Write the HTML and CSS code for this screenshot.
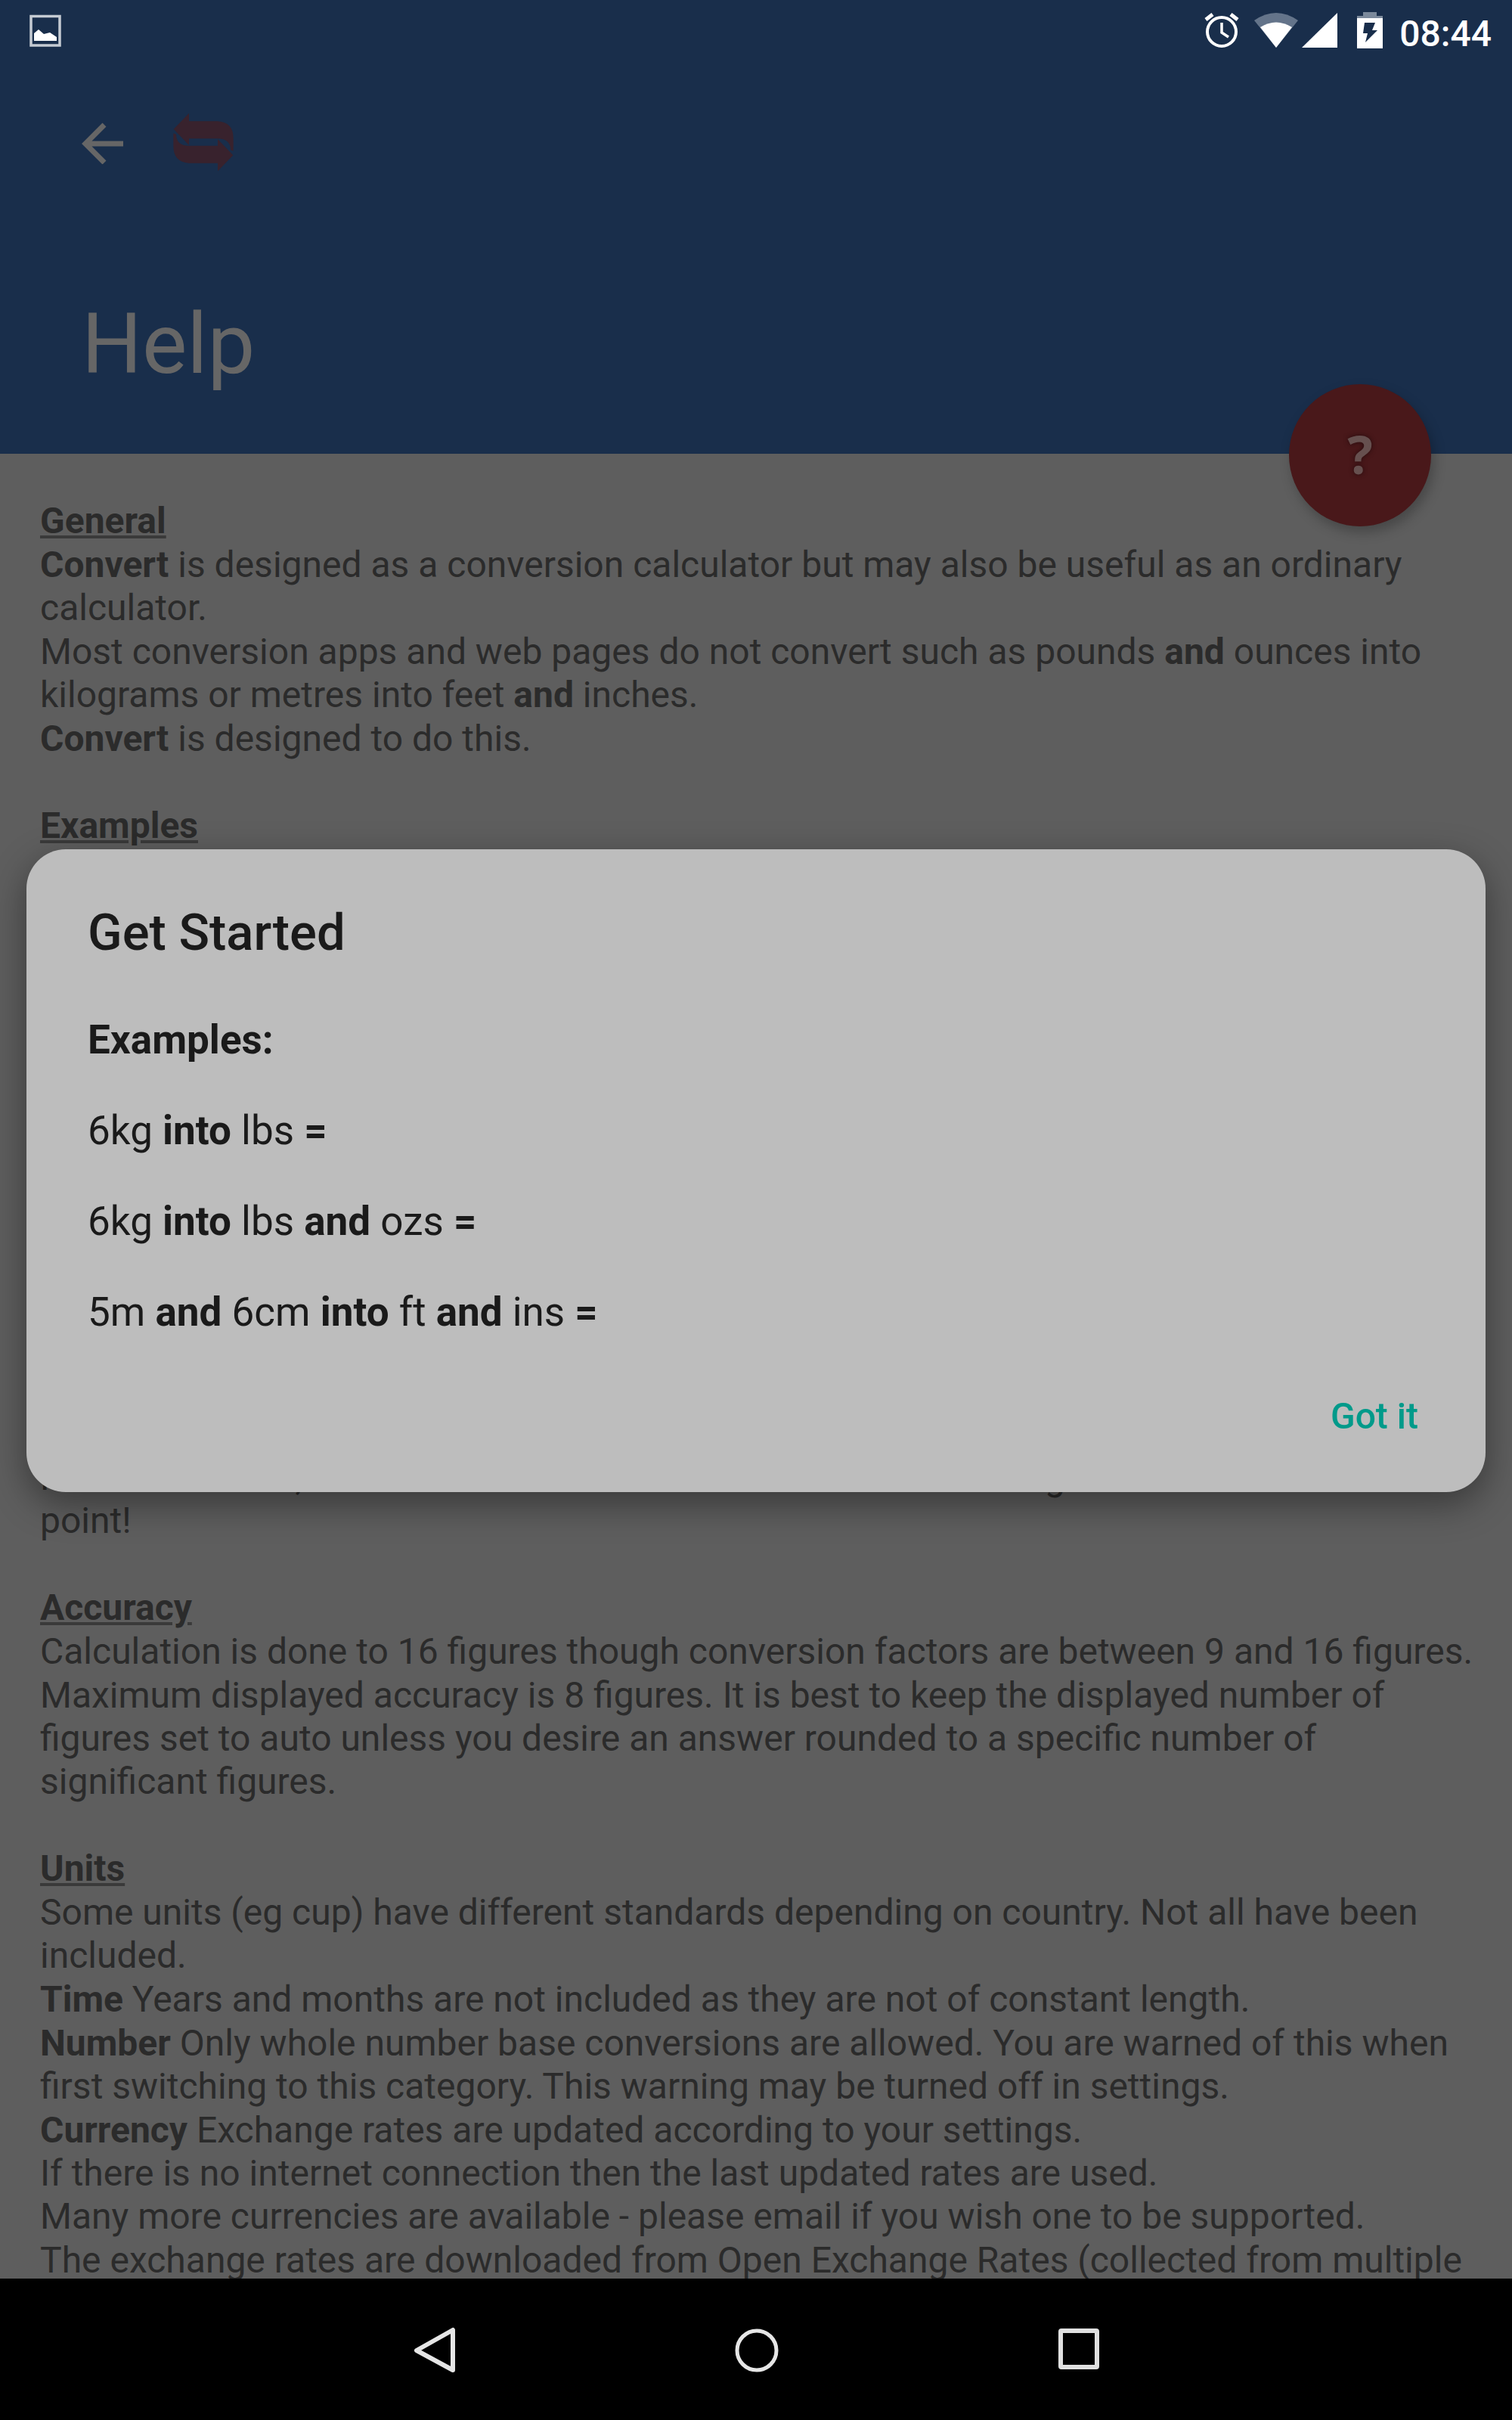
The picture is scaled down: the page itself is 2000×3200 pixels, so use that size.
FILE: index.html
```html
<!DOCTYPE html>
<html lang="en">
<head>
<meta charset="utf-8">
<meta name="viewport" content="width=device-width, initial-scale=1">
<title>Convert – Help</title>
<link rel="stylesheet" href="styles.css">
</head>
<body>
<header class="app-header">
  <div class="status-bar">
    <svg class="status-picture" width="42" height="44" viewBox="0 0 42 44" aria-hidden="true"><path d="M2 3.500H40V42H2Z" fill="none" stroke="#c5cbd3" stroke-width="3.500"/><path d="M6 26L12 21L19 27L27 25L36 31V36H6Z" fill="#fff"/></svg>
    <div class="status-right">
      <svg class="alarm" width="46" height="48" viewBox="0 0 46 48" fill="none" stroke="#fff" aria-hidden="true"><circle cx="23" cy="26" r="19" stroke-width="4"/><path d="M23 14V27L32 33" stroke-width="3.500"/><path d="M2 10L11 3M44 10L35 3" stroke-width="5"/></svg>
      <svg class="wifi" width="58" height="48" viewBox="0 0 58 48" aria-hidden="true"><path d="M0 11Q29 -9 58 11L29 47Z" fill="#64748a"/><path d="M8 20Q29 7 50 20L29 47Z" fill="#fff"/></svg>
      <svg class="signal" width="48" height="48" viewBox="0 0 48 48" aria-hidden="true"><path d="M0 47L47 1V47Z" fill="#fff"/></svg>
      <svg width="34" height="48" viewBox="0 0 34 48" aria-hidden="true"><path d="M8 0H26V5H34V10H0V5H8Z" fill="#7b899b"/><path d="M0 8H34V48H0Z" fill="#fff"/><path d="M10 14H24L20 24H27L11 40L14 28H8Z" fill="#192e4b"/></svg>
      <time class="clock">08:44</time>
    </div>
  </div>
  <div class="toolbar">
    <button class="back" type="button" aria-label="Back"><svg width="56" height="58" viewBox="0 0 56 58" fill="none" stroke="#666" stroke-width="7" aria-hidden="true"><path d="M55 31H7M30 6L5 31L30 56"/></svg></button>
    <svg class="logo" width="80" height="78" viewBox="88 56 240 234" fill="#38222d" aria-hidden="true"><path id="swap" d="M90 121L151 58V90H265Q327 94 327 158V208L316 204Q316 160 265 159H151V185Z"/><use href="#swap" transform="rotate(180 208 173)"/></svg>
  </div>
  <h1 class="title">Help</h1>
  <button class="fab" type="button" aria-label="Get started">?</button>
</header>

<main class="help">
  <section>
    <h2>General</h2>
    <p><b>Convert</b> is designed as a conversion calculator but may also be useful as an ordinary calculator.</p>
    <p>Most conversion apps and web pages do not convert such as pounds <b>and</b> ounces into kilograms or metres into feet <b>and</b> inches.</p>
    <p><b>Convert</b> is designed to do this.</p>
  </section>
  <section>
    <h2>Examples</h2>
    <p class="note">For these cases, the calculator returns the results also including the associated decimal point!</p>
  </section>
  <section>
    <h2>Accuracy</h2>
    <p>Calculation is done to 16 figures though conversion factors are between 9 and 16 figures.</p>
    <p>Maximum displayed accuracy is 8 figures. It is best to keep the displayed number of figures set to auto unless you desire an answer rounded to a specific number of significant figures.</p>
  </section>
  <section>
    <h2>Units</h2>
    <p>Some units (eg cup) have different standards depending on country. Not all have been included.</p>
    <p><b>Time</b> Years and months are not included as they are not of constant length.</p>
    <p><b>Number</b> Only whole number base conversions are allowed. You are warned of this when first switching to this category. This warning may be turned off in settings.</p>
    <p><b>Currency</b> Exchange rates are updated according to your settings.<br>If there is no internet connection then the last updated rates are used.<br>Many more currencies are available - please email if you wish one to be supported.</p>
    <p>The exchange rates are downloaded from Open Exchange Rates (collected from multiple sources).</p>
  </section>
</main>

<div class="overlay">
  <div class="dialog" role="dialog" aria-labelledby="dialog-title">
    <h2 class="dialog-title" id="dialog-title">Get Started</h2>
    <div class="dialog-body">
      <p><b>Examples:</b></p>
      <p>6kg <b>into</b> lbs <b>=</b></p>
      <p>6kg <b>into</b> lbs <b>and</b> ozs <b>=</b></p>
      <p>5m <b>and</b> 6cm <b>into</b> ft <b>and</b> ins <b>=</b></p>
    </div>
    <button class="confirm" type="button">Got it</button>
  </div>
</div>

<nav class="nav-bar">
  <button type="button" aria-label="Back"><svg width="60" height="66" viewBox="0 0 60 66" fill="none" stroke="#e6e6e6" stroke-width="6" aria-hidden="true"><path d="M55 7V60L7 34Z" stroke-linejoin="round"/></svg></button>
  <button type="button" aria-label="Home"><svg width="60" height="66" viewBox="0 0 60 66" fill="none" stroke="#e6e6e6" stroke-width="5" aria-hidden="true"><circle cx="31" cy="34" r="26"/></svg></button>
  <button type="button" aria-label="Recent apps"><svg width="60" height="66" viewBox="0 0 60 66" fill="none" stroke="#e0e0e0" stroke-width="6" aria-hidden="true"><rect x="7" y="8" width="48" height="48" rx="1"/></svg></button>
</nav>
</body>
</html>
```
FILE: styles.css
```css
* {
  box-sizing: border-box;
}

body {
  margin: 0;
  height: 100vh;
  display: flex;
  flex-direction: column;
  overflow: hidden;
  background: #5e5e5e;
  color: #2b2b2b;
  font-family: Roboto, "Noto Sans", sans-serif;
  font-size: 48px;
  line-height: 57px;
}

h1,
h2,
p {
  margin: 0;
}

button {
  padding: 0;
  border: 0;
  background: none;
  font-family: inherit;
}

svg {
  display: block;
}

/* Header */
.app-header {
  position: relative;
  flex: none;
  height: 600px;
  background: #192e4b;
  color: #666;
}

.status-bar {
  display: flex;
  justify-content: space-between;
  align-items: center;
  height: 83px;
  padding: 0 27px 3px 39px;
  color: #fff;
}

.status-right {
  display: flex;
  align-items: center;
}

.alarm {
  margin-right: 20px;
}

.wifi {
  margin-right: 5px;
}

.signal {
  margin-right: 25px;
}

.clock {
  margin-left: 22px;
  padding-top: 8px;
  font-size: 48px;
  font-weight: 500;
}

.toolbar {
  display: flex;
  align-items: center;
  gap: 65px;
  height: 210px;
  padding: 0 108px;
}

.title {
  padding: 96px 108px 0;
  font-size: 112px;
  font-weight: 400;
  line-height: 132px;
}

.fab {
  position: absolute;
  right: 107px;
  bottom: -96px;
  width: 188px;
  height: 188px;
  padding-bottom: 4px;
  border-radius: 50%;
  background: #49181a;
  color: #66504f;
  font-family: "Noto Sans", sans-serif;
  font-size: 70px;
  font-weight: 700;
  text-shadow: 0 0 6px #260b0d;
  box-shadow: 4px 8px 16px rgba(0, 0, 0, 0.25);
}

/* Help text */
.help {
  flex: 1;
  min-height: 0;
  overflow: hidden;
  display: flex;
  flex-direction: column;
  gap: 58px;
  padding: 60px 40px 0 53px;
}

.help section {
  display: flex;
  flex-direction: column;
  gap: 1px;
}

.help h2 {
  align-self: flex-start;
  font-size: inherit;
  font-weight: 700;
  text-decoration: underline #3a3a3a;
}

.note {
  padding-top: 804px;
}

/* Dialog */
.overlay {
  position: fixed;
  inset: 83px 0 187px;
  display: flex;
  align-items: center;
  padding: 0 35px;
}

.dialog {
  flex: 1;
  padding: 70px 81px;
  border-radius: 52px;
  background: #bdbdbd;
  color: #1a1a1a;
  font-size: 53px;
  line-height: 60px;
  box-shadow: 0 16px 48px rgba(0, 0, 0, 0.4);
}

.dialog-title {
  font-size: 67px;
  font-weight: 500;
  line-height: 80px;
}

.dialog-body {
  display: flex;
  flex-direction: column;
  gap: 60px;
  padding: 72px 0 78px;
}

.confirm {
  display: block;
  margin-left: auto;
  padding: 0 8px;
  color: #009a8a;
  font-size: 48px;
  font-weight: 500;
  line-height: 60px;
}

/* System navigation */
.nav-bar {
  flex: none;
  display: flex;
  justify-content: center;
  align-items: center;
  gap: 366px;
  height: 187px;
  background: #000;
}
```
